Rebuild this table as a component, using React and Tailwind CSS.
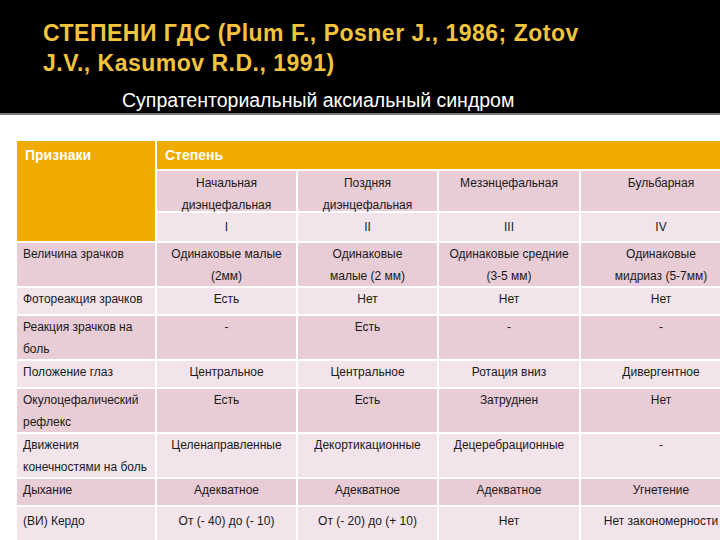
const DARK = 'bg-[#e8ccd6]';
const LIGHT = 'bg-[#f2e4ea]';

const ROWS = [
    { label: ['Величина зрачков'], cells: [['Одинаковые малые', '(2мм)'], ['Одинаковые', 'малые (2 мм)'], ['Одинаковые средние', '(3-5 мм)'], ['Одинаковые', 'мидриаз (5-7мм)']], h: 'h-[43px]', bg: DARK },
    { label: ['Фотореакция зрачков'], cells: [['Есть'], ['Нет'], ['Нет'], ['Нет']], h: 'h-[26px]', bg: LIGHT },
    { label: ['Реакция зрачков на', 'боль'], cells: [['-'], ['Есть'], ['-'], ['-']], h: 'h-[43px]', bg: DARK },
    { label: ['Положение глаз'], cells: [['Центральное'], ['Центральное'], ['Ротация вниз'], ['Дивергентное']], h: 'h-[26px]', bg: LIGHT },
    { label: ['Окулоцефалический', 'рефлекс'], cells: [['Есть'], ['Есть'], ['Затруднен'], ['Нет']], h: 'h-[43px]', bg: DARK },
    { label: ['Движения', 'конечностями на боль'], cells: [['Целенаправленные'], ['Декортикационные'], ['Децеребрационные'], ['-']], h: 'h-[43px]', bg: LIGHT },
    { label: ['Дыхание'], cells: [['Адекватное'], ['Адекватное'], ['Адекватное'], ['Угнетение']], h: 'h-[26px]', bg: DARK },
    { label: ['(ВИ) Кердо'], cells: [['От (- 40) до (- 10)'], ['От (- 20) до (+ 10)'], ['Нет', 'закономерности'], ['Нет закономерности']], h: 'h-[44px]', bg: LIGHT, pt: 'pt-[3px]' },
];

function Lines({ lines }) {
    return lines.map((l, i) => <div key={i}>{l}</div>);
}

export default function App() {
    return (
        <div className="w-[720px] h-[540px] overflow-hidden bg-white font-['Liberation_Sans',Arial,sans-serif]">
            {/* Title block */}
            <div className="h-[113px] bg-black pt-[18px]">
                <h1 className="pl-[43px] text-[23px] leading-[30px] font-bold text-[#f3c43c] tracking-[0.5px]">
                    СТЕПЕНИ ГДС (Plum F., Posner J., 1986; Zotov<br />
                    J.V., Kasumov R.D., 1991)
                </h1>
                <p className="mt-[10px] pl-[122px] text-[19.5px] leading-[24px] text-white">
                    Супратенториальный аксиальный синдром
                </p>
            </div>
            <div className="h-[2px] bg-[#7a7a7a]" />

            {/* Table */}
            <div className="pt-[26px] pl-[17px]">
                <div className="grid grid-cols-[138px_139px_139px_140px_160px] gap-[2px] text-[12px] leading-[22px] text-[#1a1a1a]">
                    <div className="row-span-3 bg-[#f0ab00] px-2 pt-[3px] text-[14px] font-bold text-white">Признаки</div>
                    <div className="col-span-4 h-[28px] bg-[#f0ab00] px-2 pt-[3px] text-[14px] font-bold text-white">Степень</div>

                    <div className={`${DARK} h-[40px] text-center pt-[1px]`}><Lines lines={['Начальная', 'диэнцефальная']} /></div>
                    <div className={`${DARK} h-[40px] text-center pt-[1px]`}><Lines lines={['Поздняя', 'диэнцефальная']} /></div>
                    <div className={`${DARK} h-[40px] text-center pt-[1px]`}>Мезэнцефальная</div>
                    <div className={`${DARK} h-[40px] text-center pt-[1px]`}>Бульбарная</div>

                    {['I', 'II', 'III', 'IV'].map((n) => (
                        <div key={n} className={`${LIGHT} h-[28px] text-center pt-[3px]`}>{n}</div>
                    ))}

                    {ROWS.map((row, r) => (
                        <div key={r} className="contents">
                            <div className={`${row.bg} ${row.h} ${row.pt || ''} pl-[6px] overflow-hidden`}>
                                <Lines lines={row.label} />
                            </div>
                            {row.cells.map((c, i) => (
                                <div key={i} className={`${row.bg} ${row.h} ${row.pt || ''} text-center overflow-hidden`}>
                                    <Lines lines={c} />
                                </div>
                            ))}
                        </div>
                    ))}
                </div>
            </div>
        </div>
    );
}
